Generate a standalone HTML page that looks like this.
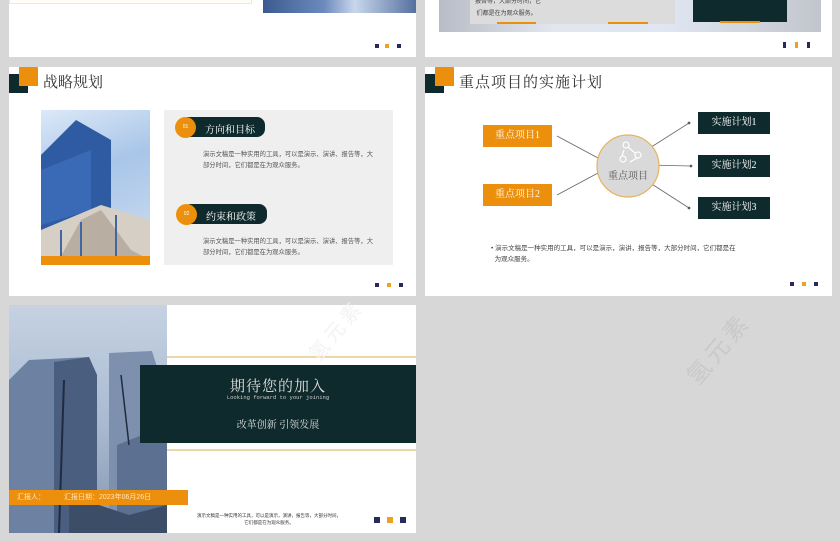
<!DOCTYPE html>
<html><head><meta charset="utf-8"><style>
*{margin:0;padding:0;box-sizing:border-box}
body{width:840px;height:541px;background:#d7d7d7;position:relative;overflow:hidden;font-family:"Liberation Sans","Noto Sans CJK SC",sans-serif}
.a{position:absolute}
.s{position:absolute;background:#fff}
.dk{background:#0f2a2c}
.or{background:#eb8f0c}
.serif{font-family:"Liberation Serif","Noto Serif CJK SC",serif}
.sm{font-size:6px;color:#555;line-height:11px}
</style></head><body>

<div class="s" style="left:9px;top:0;width:407px;height:57px">
 <div class="a" style="left:0;top:0;width:243px;height:4px;border:1px solid #f1ead0;border-top:none;background:#fffdf6"></div>
 <div class="a" style="left:254px;top:0;width:153px;height:13px;background:linear-gradient(90deg,#3c5a8f,#6c8bbd 40%,#c9d7ec 60%,#55709f)"></div>
</div>
<div class="a" style="left:375px;top:44px;width:4px;height:4px;background:#262a5e"></div>
<div class="a" style="left:385px;top:44px;width:4px;height:4px;background:#eba21c"></div>
<div class="a" style="left:397px;top:44px;width:4px;height:4px;background:#262a5e"></div>

<div class="s" style="left:425px;top:0;width:407px;height:57px">
 <div class="a" style="left:14px;top:0;width:382px;height:32px;background:linear-gradient(90deg,#b8bcc6,#e2e6ee 30%,#dfe6f2 60%,#c2c5cc)"></div>
 <div class="a" style="left:45px;top:0;width:205px;height:24px;background:#dcdcdc"></div>
 <div class="a sm" style="left:50px;top:-4px;font-size:6px;color:#444;line-height:12px">报告等，大部分时间，它<br>&nbsp;们都是在为观众服务。</div>
 <div class="a" style="left:72px;top:22px;width:39px;height:2px;background:#eb8f0c"></div>
 <div class="a" style="left:183px;top:22px;width:40px;height:2px;background:#eb8f0c"></div>
 <div class="a dk" style="left:268px;top:0;width:94px;height:22px"></div>
 <div class="a" style="left:295px;top:21px;width:40px;height:2px;background:#eb8f0c"></div>
</div>
<div class="a" style="left:783px;top:42px;width:3px;height:6px;background:#262a5e"></div>
<div class="a" style="left:795px;top:42px;width:3px;height:6px;background:#eba21c"></div>
<div class="a" style="left:807px;top:42px;width:3px;height:6px;background:#262a5e"></div>

<div class="s" style="left:9px;top:67px;width:407px;height:229px">
 <div class="a dk" style="left:0;top:7px;width:19px;height:19px"></div>
 <div class="a or" style="left:10px;top:0;width:19px;height:19px"></div>
 <div class="a serif" style="left:34px;top:4px;font-size:15px;color:#333">战略规划</div>
 <div class="a" style="left:32px;top:43px;width:109px;height:155px;background:linear-gradient(160deg,#dce9f8,#a9c5e8 40%,#cfdff2)">
  <svg width="109" height="155" style="position:absolute;left:0;top:0">
   <polygon points="0,45 35,10 70,30 70,110 0,130" fill="#2f5ba3"/>
   <polygon points="0,60 50,40 50,100 0,115" fill="#3a6ab5"/>
   <polygon points="0,120 60,95 109,110 109,155 0,155" fill="#d6cfc6"/>
   <polygon points="15,155 40,110 60,100 90,140 109,150 109,155" fill="#b8aea2"/>
   <g stroke="#4466a0" stroke-width="2"><line x1="20" y1="120" x2="20" y2="155"/><line x1="40" y1="112" x2="40" y2="155"/><line x1="75" y1="105" x2="75" y2="155"/></g>
  </svg>
 </div>
 <div class="a or" style="left:32px;top:189px;width:109px;height:9px"></div>
 <div class="a" style="left:155px;top:43px;width:229px;height:155px;background:#efefef"></div>
 <div class="a dk" style="left:178px;top:50px;width:78px;height:20px;border-radius:0 8px 8px 0"></div>
 <div class="a or" style="left:166px;top:50px;width:21px;height:21px;border-radius:50%;color:#fff;font-size:5px;text-align:center;line-height:21px">01</div>
 <div class="a serif" style="left:196px;top:54px;font-size:10px;color:#fff">方向和目标</div>
 <div class="a sm" style="left:194px;top:82px;width:176px;font-size:6.3px">演示文稿是一种实用的工具，可以是演示、演讲、报告等，大部分时间，它们都是在为观众服务。</div>
 <div class="a dk" style="left:180px;top:137px;width:78px;height:20px;border-radius:0 8px 8px 0"></div>
 <div class="a or" style="left:167px;top:137px;width:21px;height:21px;border-radius:50%;color:#fff;font-size:5px;text-align:center;line-height:21px">02</div>
 <div class="a serif" style="left:197px;top:141px;font-size:10px;color:#fff">约束和政策</div>
 <div class="a sm" style="left:194px;top:169px;width:176px;font-size:6.3px">演示文稿是一种实用的工具，可以是演示、演讲、报告等，大部分时间，它们都是在为观众服务。</div>
 <div class="a" style="left:366px;top:216px;width:4px;height:4px;background:#262a5e"></div>
 <div class="a" style="left:378px;top:216px;width:4px;height:4px;background:#eba21c"></div>
 <div class="a" style="left:390px;top:216px;width:4px;height:4px;background:#262a5e"></div>
</div>

<div class="s" style="left:425px;top:67px;width:407px;height:229px">
 <div class="a dk" style="left:0;top:7px;width:19px;height:19px"></div>
 <div class="a or" style="left:10px;top:0;width:19px;height:19px"></div>
 <div class="a serif" style="left:34px;top:4px;font-size:15px;color:#333;letter-spacing:1px">重点项目的实施计划</div>
 <svg class="a" style="left:0;top:0" width="407" height="229">
  <g stroke="#666" stroke-width="0.8" fill="#444">
   <line x1="132" y1="69" x2="173" y2="91"/><line x1="132" y1="128" x2="173" y2="106"/>
   <line x1="220" y1="84" x2="264" y2="56"/><line x1="222" y1="98" x2="266" y2="99"/><line x1="219" y1="112" x2="264" y2="141"/>
   <circle cx="264" cy="56" r="1"/><circle cx="266" cy="99" r="1"/><circle cx="264" cy="141" r="1"/>
  </g>
  <circle cx="203" cy="99" r="31" fill="#d9d9d9" stroke="#e6b45c" stroke-width="1.2"/>
  <g fill="none" stroke="#fff" stroke-width="1.2"><circle cx="201" cy="78" r="3"/><circle cx="213" cy="88" r="3"/><circle cx="198" cy="92" r="3"/><path d="M203 80 L210 86 M212 91 L205 95 M197 89 L199 83"/></g>
 </svg>
 <div class="a serif" style="left:175px;top:100px;width:56px;text-align:center;font-size:10px;color:#555">重点项目</div>
 <div class="a or serif" style="left:58px;top:58px;width:69px;height:22px;color:#fff;font-size:10px;text-align:center;line-height:22px">重点项目1</div>
 <div class="a or serif" style="left:58px;top:117px;width:69px;height:22px;color:#fff;font-size:10px;text-align:center;line-height:22px">重点项目2</div>
 <div class="a dk serif" style="left:273px;top:45px;width:72px;height:22px;color:#fff;font-size:10px;text-align:center;line-height:22px">实施计划1</div>
 <div class="a dk serif" style="left:273px;top:88px;width:72px;height:22px;color:#fff;font-size:10px;text-align:center;line-height:22px">实施计划2</div>
 <div class="a dk serif" style="left:273px;top:130px;width:72px;height:22px;color:#fff;font-size:10px;text-align:center;line-height:22px">实施计划3</div>
 <div class="a sm" style="left:66px;top:176px;width:300px;font-size:6.5px;color:#444">• 演示文稿是一种实用的工具，可以是演示，演讲，报告等，大部分时间，它们都是在<br>&nbsp;&nbsp;为观众服务。</div>
 <div class="a" style="left:365px;top:215px;width:4px;height:4px;background:#262a5e"></div>
 <div class="a" style="left:377px;top:215px;width:4px;height:4px;background:#eba21c"></div>
 <div class="a" style="left:389px;top:215px;width:4px;height:4px;background:#262a5e"></div>
</div>

<div class="s" style="left:9px;top:305px;width:407px;height:228px">
 <div class="a" style="left:0;top:0;width:158px;height:228px;background:linear-gradient(180deg,#c6d2e2,#aabbd2 50%,#8597b2)">
  <svg width="158" height="228" style="position:absolute;left:0;top:0">
   <polygon points="0,75 20,55 80,52 88,70 88,228 0,228" fill="#6d82a2"/>
   <polygon points="45,57 80,52 88,70 88,228 45,228" fill="#4a5e80"/>
   <polygon points="100,48 143,46 148,62 148,228 100,228" fill="#7d90ad"/>
   <polygon points="108,140 158,120 158,228 108,228" fill="#5c7092"/>
   <line x1="55" y1="75" x2="50" y2="228" stroke="#1f2b40" stroke-width="2"/>
   <line x1="112" y1="70" x2="120" y2="140" stroke="#1f2b40" stroke-width="1.5"/>
   <polygon points="60,190 120,210 158,200 158,228 60,228" fill="#3c4d68"/>
  </svg>
 </div>
 <div class="a" style="left:158px;top:51px;width:249px;height:2px;background:#edd7a8"></div>
 <div class="a" style="left:158px;top:144px;width:249px;height:2px;background:#edd7a8"></div>
 <div class="a" style="left:290px;top:10px;font-size:20px;color:#f3f3f3;transform:rotate(-50deg);letter-spacing:4px">氢元素</div>
 <div class="a dk" style="left:131px;top:60px;width:276px;height:78px"></div>
 <div class="a serif" style="left:131px;top:70px;width:276px;text-align:center;color:#ddd;font-size:15px;letter-spacing:1px">期待您的加入</div>
 <div class="a" style="left:131px;top:89px;width:276px;text-align:center;color:#ccc;font-size:5.5px;font-family:'Liberation Mono',monospace">Looking forward to your joining</div>
 <div class="a serif" style="left:131px;top:111px;width:276px;text-align:center;color:#ddd;font-size:10px">改革创新 引领发展</div>
 <div class="a or" style="left:0;top:185px;width:179px;height:15px"></div>
 <div class="a" style="left:8px;top:187px;color:#fde6c2;font-size:7px">汇报人：</div>
 <div class="a" style="left:55px;top:187px;color:#fde6c2;font-size:7px">汇报日期：2023年06月26日</div>
 <div class="a" style="left:175px;top:207px;width:170px;text-align:center;font-size:4.5px;line-height:7px;color:#333">演示文稿是一种实用的工具，可以是演示，演讲，报告等，大部分时间，<br>它们都是在为观众服务。</div>
 <div class="a" style="left:365px;top:212px;width:6px;height:6px;background:#262a5e"></div>
 <div class="a" style="left:378px;top:212px;width:6px;height:6px;background:#eba21c"></div>
 <div class="a" style="left:391px;top:212px;width:6px;height:6px;background:#262a5e"></div>
</div>

<div class="a" style="left:675px;top:330px;font-size:24px;color:#c9c9c9;transform:rotate(-50deg);letter-spacing:4px">氢元素</div>
</body></html>
